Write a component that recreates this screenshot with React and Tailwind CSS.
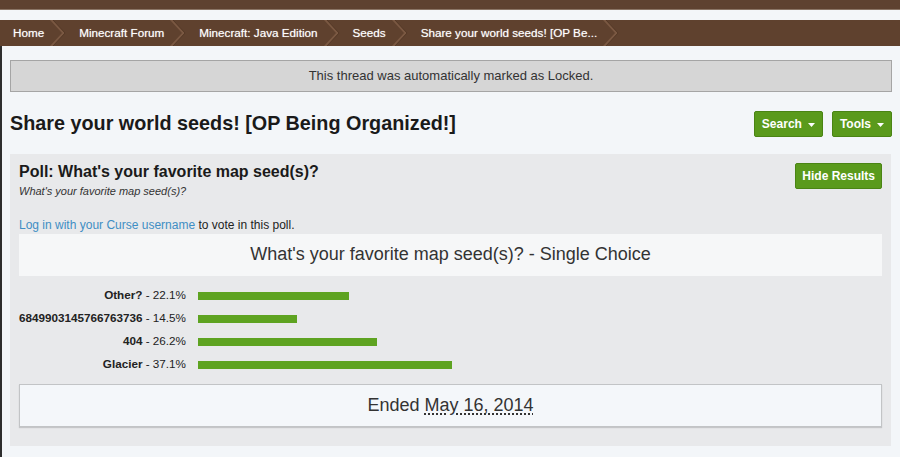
const crumbs = ['Home', 'Minecraft Forum', 'Minecraft: Java Edition', 'Seeds', 'Share your world seeds! [OP Be...'];

const results = [
  { label: 'Other?', pct: 22.1 },
  { label: '6849903145766763736', pct: 14.5 },
  { label: '404', pct: 26.2 },
  { label: 'Glacier', pct: 37.1 },
];

function Caret() {
  return (
    <svg width="7" height="4" viewBox="0 0 7 4" className="ml-[6px] mt-[2px]">
      <polygon points="0,0 7,0 3.5,4" fill="#ffffff" />
    </svg>
  );
}

function Crumb({ text }) {
  return (
    <div className="flex h-full items-center">
      <span className="pl-[13px] pr-[6px] text-[11.7px] text-white [text-shadow:0_0_1px_rgba(255,255,255,0.6)]">{text}</span>
      <svg width="16" height="26" viewBox="0 0 16 26" className="shrink-0">
        <polygon points="0,0 3,0 15,13 3,26 0,26 12,13" fill="#7a5842" />
        <polyline points="3,0 15,13 3,26" fill="none" stroke="#543927" strokeWidth="1" />
      </svg>
    </div>
  );
}

export default function App() {
  return (
    <div className="w-[900px] h-[457px] overflow-hidden bg-[#f3f6f9] font-['Liberation_Sans',Arial,sans-serif] text-[#222]">
      <div className="h-[10px] bg-[#5e4230] border-b border-[#8a7565]"></div>
      <div className="h-[10px]"></div>
      <div className="flex h-[26px] bg-[#5f412e]">
        {crumbs.map((c) => (
          <Crumb key={c} text={c} />
        ))}
      </div>

      <div className="border-l-2 border-[#2e2e2e] h-[411px] px-[8px] pt-[14px]">
        <div className="h-[32px] flex items-center justify-center bg-[#d6d6d6] border border-[#a5a5a5] text-[13px] text-[#333]">
          This thread was automatically marked as Locked.
        </div>

        <div className="flex items-center justify-between mt-[19px] h-[26px]">
          <h1 className="text-[19.8px] font-bold text-[#1a1a1a]">Share your world seeds! [OP Being Organized!]</h1>
          <div className="flex gap-[9px] -mt-[1px]">
            <button className="flex items-center h-[26px] px-[7px] bg-[#5a9a1c] border border-[#4a8414] rounded-[2px] text-[12px] font-bold text-white">
              Search <Caret />
            </button>
            <button className="flex items-center h-[26px] px-[7px] bg-[#5a9a1c] border border-[#4a8414] rounded-[2px] text-[12px] font-bold text-white">
              Tools <Caret />
            </button>
          </div>
        </div>

        <div className="mt-[17px] bg-[#e8e9eb] px-[9px] pt-[9px] pb-[19px] mr-[1px]">
          <div className="flex justify-between">
            <div>
              <h2 className="text-[16px] font-bold leading-[18px] text-[#1a1a1a]">Poll: What's your favorite map seed(s)?</h2>
              <p className="text-[11px] italic text-[#333] mt-[2px]">What's your favorite map seed(s)?</p>
            </div>
            <button className="h-[26px] px-[6px] bg-[#5a9a1c] border border-[#4a8414] rounded-[2px] text-[12px] font-bold text-white">
              Hide Results
            </button>
          </div>

          <p className="text-[12px] mt-[16px] text-[#222]">
            <span className="text-[#3f8ec4]">Log in with your Curse username</span> to vote in this poll.
          </p>

          <div className="h-[42px] flex items-center justify-center bg-[#f6f7f8] text-[18px] text-[#333]">
            What's your favorite map seed(s)? - Single Choice
          </div>

          <div className="mt-[10px] flex flex-col gap-[5px]">
            {results.map((r) => (
              <div key={r.label} className="flex items-center h-[18px]">
                <div className="w-[167px] flex justify-end whitespace-nowrap text-[11.7px] text-[#222]">
                  <span><span className="font-bold">{r.label}</span> - {r.pct}%</span>
                </div>
                <div className="flex-1 ml-[12px] pt-[3px]">
                  <div className="h-[8px] bg-[#5ea321]" style={{ width: `${r.pct}%` }}></div>
                </div>
              </div>
            ))}
          </div>

          <div className="mt-[11px] h-[43px] flex items-center justify-center bg-[#f4f7fa] border border-[#c2c4c6] shadow-[0_1px_1px_rgba(0,0,0,0.15)] text-[18px] text-[#333]">
            Ended&nbsp;<span className="underline decoration-dotted underline-offset-[3px]">May 16, 2014</span>
          </div>
        </div>
      </div>
    </div>
  );
}
